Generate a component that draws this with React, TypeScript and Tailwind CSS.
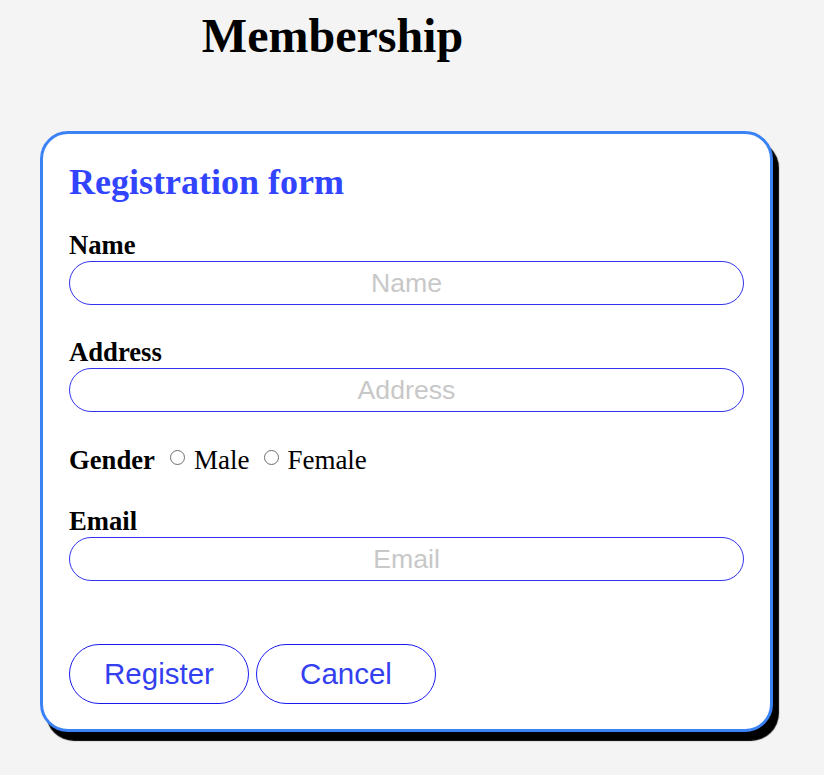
import React from "react";

const serif = "font-['Liberation_Serif','Times_New_Roman',serif]";
const sans = "font-['Liberation_Sans',Arial,sans-serif]";

type FieldProps = {
  label: string;
  top: string;
};

const Field: React.FC<FieldProps> = ({ label, top }: FieldProps) => {
  return (
    <div className={`flex flex-col ${top}`}>
      <label className={`${serif} font-bold text-[26.67px] leading-[30px] text-black`}>
        {label}
      </label>
      <input
        type="text"
        placeholder={label}
        className={`${sans} mt-[1px] h-[44px] w-full rounded-full border border-[#3333ee] bg-white px-4 text-center text-[26.67px] outline-none placeholder:text-[#c8c8c8]`}
      />
    </div>
  );
};

const radio =
  "mt-[5px] h-[15px] w-[15px] shrink-0 appearance-none rounded-full border border-[#6e6e6e] bg-white checked:border-[4px] checked:border-[#1a73e8]";

const App: React.FC = () => {
  return (
    <div className="min-h-[775px] w-full bg-[#f4f4f4]">
      <div className="w-[665px] pt-[8px] text-center">
        <h1 className={`${serif} text-[48px] font-bold leading-[56px] text-black`}>
          Membership
        </h1>
      </div>

      <form
        className="ml-[40px] mt-[67px] w-[733px] rounded-[28px] border-[3px] border-[#3b82f6] bg-white px-[26px] pt-[28px] pb-[25px] shadow-[6px_9px_1px_#000]"
        onSubmit={(e) => e.preventDefault()}
      >
        <h2 className={`${serif} text-[36px] font-bold leading-[40px] text-[#3344ff]`}>
          Registration form
        </h2>

        <Field label="Name" top="mt-[28px]" />
        <Field label="Address" top="mt-[32px]" />

        <div className={`${serif} mt-[33px] flex h-[30px] items-start text-[26.67px] leading-[30px] text-black`}>
          <span className="font-bold">Gender</span>
          <input type="radio" name="gender" id="male" className={`ml-[15px] ${radio}`} />
          <label htmlFor="male" className="ml-[9px] text-[27px]">
            Male
          </label>
          <input type="radio" name="gender" id="female" className={`ml-[15px] ${radio}`} />
          <label htmlFor="female" className="ml-[8px] text-[27px]">
            Female
          </label>
        </div>

        <Field label="Email" top="mt-[31px]" />

        <div className="mt-[63px] flex">
          <button
            type="submit"
            className={`${sans} h-[60px] w-[180px] rounded-full border border-[#1a1aee] bg-white text-[29.5px] text-[#3340f0]`}
          >
            Register
          </button>
          <button
            type="button"
            className={`${sans} ml-[7px] h-[60px] w-[180px] rounded-full border border-[#1a1aee] bg-white text-[29.5px] text-[#3340f0]`}
          >
            Cancel
          </button>
        </div>
      </form>
    </div>
  );
};

export default App;
